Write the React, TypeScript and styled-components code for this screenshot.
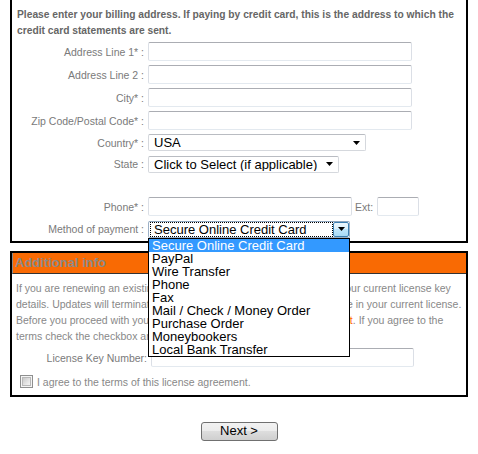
import React from "react";
import styled, { createGlobalStyle } from "styled-components";

const Global = createGlobalStyle`
  html, body { margin: 0; padding: 0; background: #fff; }
  body { font-family: "Liberation Sans", Arial, sans-serif; }
`;

const Page = styled.div`
  width: 478px;
  height: 454px;
  overflow: hidden;
  padding: 0 10px;
  box-sizing: border-box;
`;

const BillingPanel = styled.div`
  width: 458px;
  box-sizing: border-box;
  border: 2px solid #000;
  border-top: none;
  padding-bottom: 1px;
`;

const Intro = styled.p`
  margin: 0 0 1px;
  padding: 7px 5px 0;
  font-size: 10.25px;
  font-weight: bold;
  line-height: 16px;
  color: #666;
  white-space: nowrap;
`;

const Row = styled.div<{ $h: number; $label?: number }>`
  display: grid;
  grid-template-columns: ${(p) => p.$label ?? 132}px auto;
  column-gap: 4px;
  align-items: center;
  height: ${(p) => p.$h}px;
`;

const Spacer = styled.div<{ $h: number }>`
  height: ${(p) => p.$h}px;
`;

const Label = styled.label`
  text-align: right;
  font-size: 10.5px;
  color: #7a7a7a;
  white-space: nowrap;
`;

const Field = styled.div`
  display: flex;
  align-items: center;
`;

const TextInput = styled.input<{ $w: number }>`
  width: ${(p) => p.$w}px;
  height: 19px;
  box-sizing: border-box;
  margin: 0;
  padding: 0 3px;
  border: 1px solid #dbdfe6;
  border-top-color: #abadb3;
  border-bottom-color: #e3e9ef;
  border-radius: 2px;
  background: #fff;
  font: 13px "Liberation Sans", Arial, sans-serif;
  outline: none;
`;

const ExtLabel = styled.span`
  font-size: 10.5px;
  color: #7a7a7a;
  margin: 0 4px 0 3px;
`;

const SelectBox = styled.div<{ $w: number; $open?: boolean }>`
  position: relative;
  width: ${(p) => p.$w}px;
  height: 17px;
  box-sizing: border-box;
  display: flex;
  align-items: center;
  border: 1px solid ${(p) => (p.$open ? "#9cb0c6" : "#d5d8dd")};
  border-top-color: ${(p) => (p.$open ? "#8ea5be" : "#b9bcc2")};
  border-radius: 2px;
  background: #fff;
  font-size: 13px;
  color: #000;
`;

const SelectValue = styled.span<{ $focus?: boolean }>`
  flex: 1;
  height: 15px;
  line-height: 14px;
  box-sizing: border-box;
  padding-left: ${(p) => (p.$focus ? 3 : 4)}px;
  margin-left: ${(p) => (p.$focus ? 1 : 0)}px;
  border: ${(p) => (p.$focus ? "1px dotted #000" : "1px solid transparent")};
  white-space: nowrap;
  overflow: hidden;
`;

const ArrowSlot = styled.span<{ $button?: boolean }>`
  width: ${(p) => (p.$button ? 16 : 13)}px;
  height: 15px;
  box-sizing: border-box;
  display: flex;
  align-items: center;
  justify-content: center;
  margin-right: ${(p) => (p.$button ? 0 : 2)}px;
  border: ${(p) => (p.$button ? "1px solid #3c7fb1" : "none")};
  border-radius: 2px;
  background: ${(p) =>
    p.$button ? "linear-gradient(#eaf6fd, #d9f0fc 50%, #bee6fd 50%, #a7d9f5)" : "transparent"};
`;

const DropList = styled.ul`
  position: absolute;
  left: -1px;
  top: 16px;
  width: 202px;
  box-sizing: border-box;
  margin: 0;
  padding: 0;
  list-style: none;
  border: 1px solid #000;
  background: #fff;
  z-index: 10;
`;

const DropItem = styled.li<{ $selected?: boolean }>`
  height: 13px;
  line-height: 13px;
  padding-left: 3px;
  font-size: 13px;
  white-space: nowrap;
  background: ${(p) => (p.$selected ? "#3399ff" : "#fff")};
  color: ${(p) => (p.$selected ? "#fff" : "#000")};
`;

const InfoPanel = styled.div`
  width: 458px;
  box-sizing: border-box;
  margin-top: 8px;
  border: 2px solid #000;
`;

const InfoHeader = styled.div`
  height: 21px;
  box-sizing: border-box;
  border-bottom: 1px solid #333;
  border-left: 1px solid #8a8a8a;
  background: #f96a03;
  padding-left: 2px;
  font-size: 13px;
  font-weight: bold;
  line-height: 20px;
  color: #8a8a8a;
`;

const InfoText = styled.p`
  margin: 0;
  padding: 6px 4px 0;
  font-size: 10.5px;
  line-height: 16px;
  color: #888;
  white-space: nowrap;
`;

const Link = styled.a`
  color: #ff6600;
  text-decoration: none;
`;

const AgreeRow = styled.label`
  display: flex;
  align-items: center;
  padding: 6px 0 7px 8px;
  font-size: 10.5px;
  color: #888;
`;

const CheckBox = styled.span`
  width: 13px;
  height: 13px;
  box-sizing: border-box;
  border: 1px solid #8e8f8f;
  padding: 1px;
  background: #f4f4f4;
  margin-right: 4px;
  display: inline-flex;
  &::after {
    content: "";
    flex: 1;
    border: 1px solid #b8b8b8;
    background: linear-gradient(135deg, #c9c9c9, #e9e9e9 70%, #f2f2f2);
  }
`;

const ButtonBar = styled.div`
  display: flex;
  justify-content: center;
  margin-top: 25px;
`;

const NextButton = styled.button`
  width: 77px;
  height: 19px;
  box-sizing: border-box;
  padding: 0 0 1px;
  border: 1px solid #707070;
  border-radius: 3px;
  background: linear-gradient(#f2f2f2, #ebebeb 50%, #dddddd 50%, #cfcfcf);
  font: 13px "Liberation Sans", Arial, sans-serif;
  color: #000;
  line-height: 16px;
`;

const Arrow = () => (
  <svg width="7" height="4" viewBox="0 0 7 4">
    <path d="M0 0H7L3.5 4Z" fill="#000" />
  </svg>
);

const paymentMethods = [
  "Secure Online Credit Card",
  "PayPal",
  "Wire Transfer",
  "Phone",
  "Fax",
  "Mail / Check / Money Order",
  "Purchase Order",
  "Moneybookers",
  "Local Bank Transfer",
];

export default function App() {
  return (
    <Page>
      <Global />
      <BillingPanel>
        <Intro>
          Please enter your billing address. If paying by credit card, this is the address to which the
          <br />
          credit card statements are sent.
        </Intro>
        <Row $h={23}>
          <Label>Address Line 1* :</Label>
          <Field><TextInput $w={264} /></Field>
        </Row>
        <Row $h={23}>
          <Label>Address Line 2 :</Label>
          <Field><TextInput $w={264} /></Field>
        </Row>
        <Row $h={23}>
          <Label>City* :</Label>
          <Field><TextInput $w={264} /></Field>
        </Row>
        <Row $h={23}>
          <Label>Zip Code/Postal Code* :</Label>
          <Field><TextInput $w={264} /></Field>
        </Row>
        <Row $h={21}>
          <Label>Country* :</Label>
          <Field>
            <SelectBox $w={218}>
              <SelectValue>USA</SelectValue>
              <ArrowSlot><Arrow /></ArrowSlot>
            </SelectBox>
          </Field>
        </Row>
        <Row $h={22}>
          <Label>State :</Label>
          <Field>
            <SelectBox $w={191}>
              <SelectValue>Click to Select (if applicable)</SelectValue>
              <ArrowSlot><Arrow /></ArrowSlot>
            </SelectBox>
          </Field>
        </Row>
        <Spacer $h={20} />
        <Row $h={23}>
          <Label>Phone* :</Label>
          <Field>
            <TextInput $w={204} />
            <ExtLabel>Ext:</ExtLabel>
            <TextInput $w={42} />
          </Field>
        </Row>
        <Row $h={22}>
          <Label>Method of payment :</Label>
          <Field>
            <SelectBox $w={202} $open>
              <SelectValue $focus>Secure Online Credit Card</SelectValue>
              <ArrowSlot $button><Arrow /></ArrowSlot>
              <DropList>
                {paymentMethods.map((m, i) => (
                  <DropItem key={m} $selected={i === 0}>{m}</DropItem>
                ))}
              </DropList>
            </SelectBox>
          </Field>
        </Row>
      </BillingPanel>

      <InfoPanel>
        <InfoHeader>Additional info</InfoHeader>
        <InfoText>
          If you are renewing an existing license, please enter below the info of your current license key
          <br />
          details. Updates will terminate on the maintenance and support end date in your current license.
          <br />
          Before you proceed with your order, please check the license <Link href="#">agreement</Link>. If you agree to the
          <br />
          terms check the checkbox and click Next to continue.
        </InfoText>
        <Row $h={23} $label={135} style={{ marginTop: 2 }}>
          <Label>License Key Number:</Label>
          <Field><TextInput $w={263} /></Field>
        </Row>
        <AgreeRow>
          <CheckBox />
          I agree to the terms of this license agreement.
        </AgreeRow>
      </InfoPanel>

      <ButtonBar>
        <NextButton>Next &gt;</NextButton>
      </ButtonBar>
    </Page>
  );
}
